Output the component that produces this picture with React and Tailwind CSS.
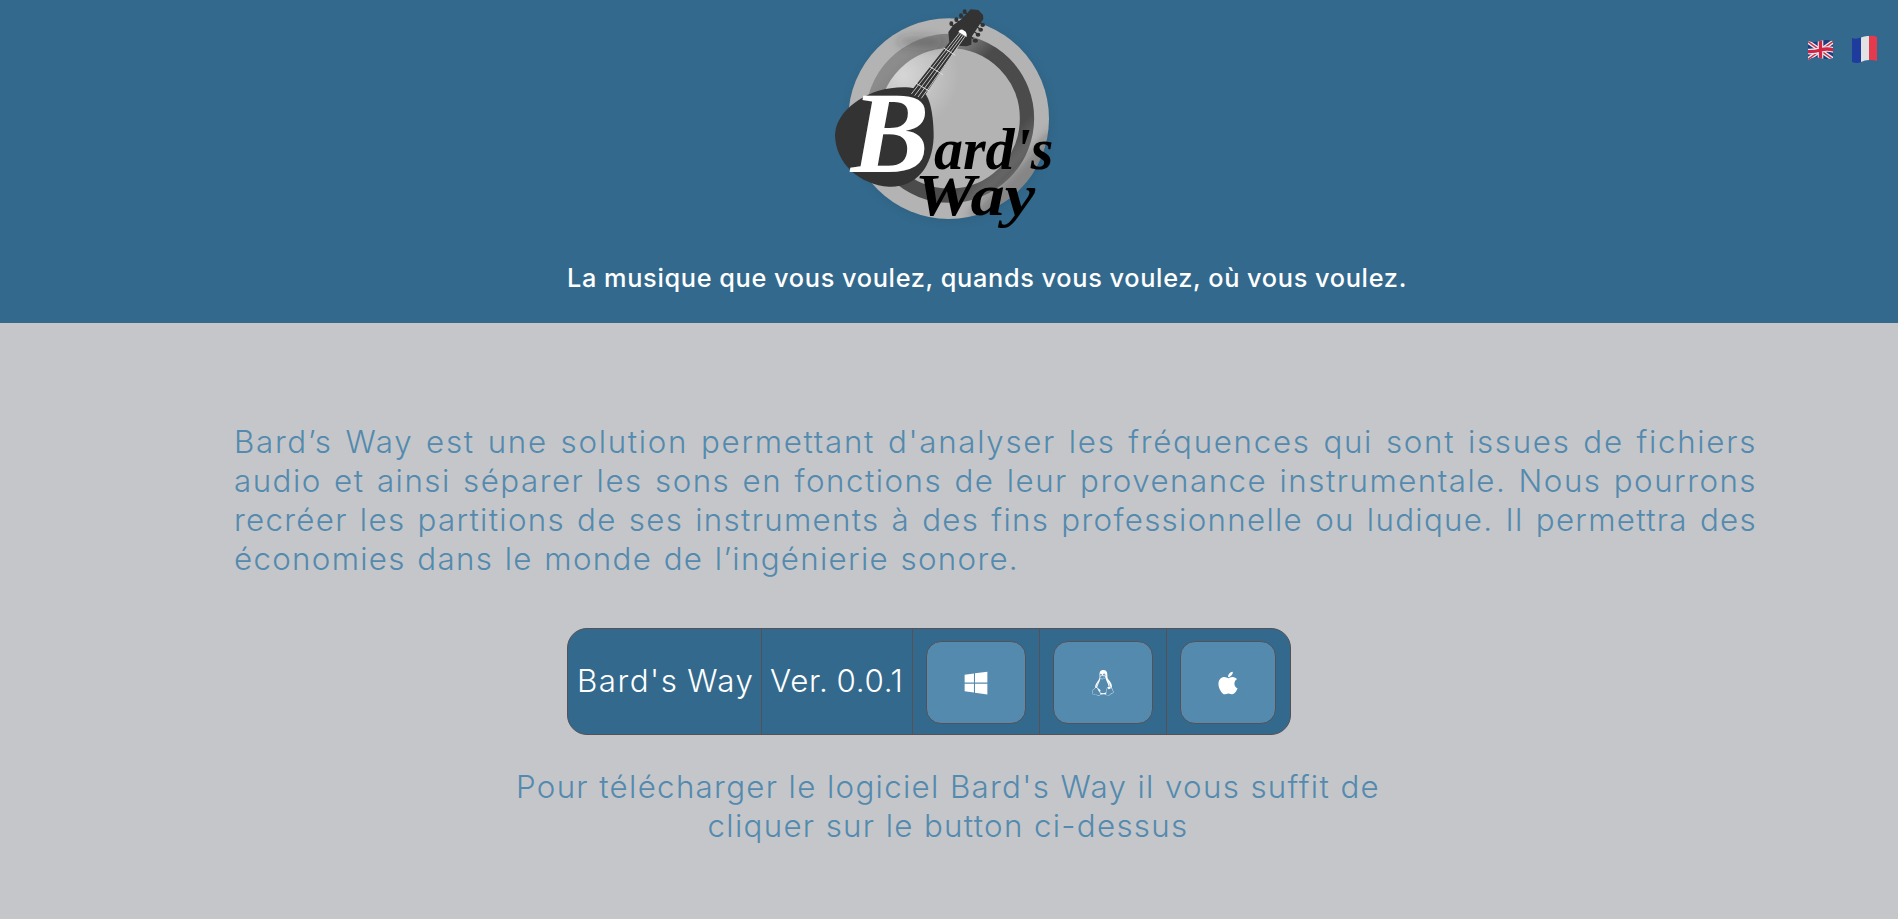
import React from "react";
import { FaWindows, FaLinux, FaApple } from "react-icons/fa";

const lines = [
  ["Bard’s Way est une solution permettant d'analyser les fréquences qui sont issues de fichiers", "w-[1523px] tracking-[1.7px]"],
  ["audio et ainsi séparer les sons en fonctions de leur provenance instrumentale. Nous pourrons", "w-[1523px] tracking-[1.5px]"],
  ["recréer les partitions de ses instruments à des fins professionnelle ou ludique. Il permettra des", "w-[1523px] tracking-[1.3px]"],
  ["économies dans le monde de l’ingénierie sonore.", "w-[785px] tracking-[1.3px]"],
];

function Logo() {
  return (
    <svg className="block h-[240px] w-[250px]" viewBox="0 0 750 720" aria-label="Bard's Way">
      <defs>
        <linearGradient id="ring" x1="0" y1="0" x2="1" y2="1">
          <stop offset="0.15" stopColor="#8c8c8c" />
          <stop offset="0.32" stopColor="#747474" />
          <stop offset="0.42" stopColor="#4b4b4b" />
          <stop offset="0.75" stopColor="#4b4b4b" />
          <stop offset="0.9" stopColor="#777" />
        </linearGradient>
        <radialGradient id="shine" cx="0.2" cy="0.22" r="0.36">
          <stop offset="0" stopColor="#d6d6d6" />
          <stop offset="1" stopColor="#b3b3b3" />
        </radialGradient>
        <filter id="soft" x="-30%" y="-30%" width="160%" height="160%">
          <feGaussianBlur stdDeviation="14" />
        </filter>
        <clipPath id="disc"><circle cx="386" cy="356" r="301" /></clipPath>
      </defs>
      <circle cx="389" cy="362" r="300" fill="#1e4259" opacity="0.2" filter="url(#soft)" />
      <circle cx="386" cy="356" r="301" fill="#b3b3b3" />
      <circle cx="389" cy="355" r="232" fill="url(#shine)" stroke="url(#ring)" strokeWidth="43" />
      <g clipPath="url(#disc)">
        <g filter="url(#soft)">
          <path d="M610 480 L700 385 L690 520 L610 600 L570 660 L440 650 Z" fill="#222" opacity="0.3" />
          <ellipse cx="300" cy="125" rx="70" ry="15" fill="#333" opacity="0.3" />
        </g>
      </g>
      <path d="M45 404C48 344 105 296 173 273C228 257 288 258 311 276C334 297 341 360 341 412C337 505 285 563 207 560C120 554 46 491 45 404Z" fill="#333" />
      <path d="M273 274L388 127L385 96L400 75L425 57L452 28L475 30L489 45L490 57L472 84L455 110L454 134L439 139L415 137L307 296Z" fill="#333" />
      <g fill="#333" stroke="#333" strokeWidth="4">
        <path d="M393 71L410 87M408 59L423 70M422 47L438 57M433 35L448 47M460 116L443 104M472 102L455 89M481 88L464 75M488 74L471 61" />
        <ellipse cx="394" cy="71" rx="4" ry="5" /><ellipse cx="409" cy="59" rx="4" ry="5" /><ellipse cx="423" cy="47" rx="4" ry="5" /><ellipse cx="434" cy="35" rx="4" ry="5" />
        <ellipse cx="466" cy="122" rx="6" ry="4" /><ellipse cx="474" cy="104" rx="5" ry="4" /><ellipse cx="482" cy="89" rx="5" ry="4" /><ellipse cx="488" cy="75" rx="5" ry="4" />
      </g>
      <path d="M415 96Q419 87 428 89L437 95Q442 102 440 111L430 105Z" fill="#fff" />
      <g stroke="#ddd" strokeWidth="2.5" fill="none">
        <path d="M418 99L274 282M424 102L284 287M430 105L294 291M436 108L304 295" />
        <path d="M371 144L406 166M328 199L369 224M287 249L329 274" strokeWidth="3" />
      </g>
      <g fontFamily="'Liberation Serif', serif" fontWeight="700" fontStyle="italic">
        <text x="92" y="515" fontSize="350" fill="#fff" textLength="236" lengthAdjust="spacingAndGlyphs">B</text>
        <text x="342" y="506" fontSize="176" textLength="358" lengthAdjust="spacingAndGlyphs">ard's</text>
        <text x="284" y="645" fontSize="180" textLength="362" lengthAdjust="spacingAndGlyphs">Way</text>
      </g>
    </svg>
  );
}

function UnitedKingdomFlag() {
  return (
    <svg className="h-[24px] w-[27px]" viewBox="0 0 27 24">
      <defs><clipPath id="uk"><path d="M1 3Q7 5 13 3T26 3V20Q20 22 13 20T1 22Z" /></clipPath></defs>
      <g clipPath="url(#uk)">
        <path d="M0 0H27V24H0Z" fill="#1d3f80" />
        <path d="M0 3L27 22M27 3L0 22" stroke="#e8e8ee" strokeWidth="4" />
        <path d="M0 3L27 22M27 3L0 22" stroke="#d22c42" strokeWidth="1.5" />
        <path d="M13.5 0V24M0 13.5Q7 14 13.5 12T27 12" fill="none" stroke="#e8e8ee" strokeWidth="5.6" />
        <path d="M13.5 0V24M0 13.5Q7 14 13.5 12T27 12" fill="none" stroke="#d22442" strokeWidth="3.3" />
      </g>
    </svg>
  );
}

function FrenchFlag() {
  return (
    <svg className="h-[30px] w-[26px]" viewBox="0 0 26 30">
      <path d="M0 3Q4 4.5 9 2.5V27Q5 29 0 27Z" fill="#1d3c9e" />
      <path d="M9 2.5Q13 .5 17 1V25Q13 25 9 27Z" fill="#e1e2e4" />
      <path d="M17 1Q22 0 25 2V26Q21 24.5 17 25Z" fill="#e43a4d" />
    </svg>
  );
}

const button = "flex h-[83px] items-center justify-center rounded-[15px] border border-[#555157] bg-[#538aae] text-white";

export default function App() {
  return (
    <div className="flex h-[919px] flex-col overflow-hidden bg-[#c5c6ca] font-['Inter','Liberation_Sans',sans-serif] text-[31.3px] leading-[39px] font-[360] [word-spacing:-1.5px] text-[#538aae]">
      <header className="relative h-[323px] shrink-0 bg-[#33698c] text-white">
        <div className="flex pl-[820px]"><Logo /></div>
        <p className="ml-[567px] w-[840px] pt-[20px] text-[25.3px] leading-[36px] font-medium tracking-[0.7px] whitespace-nowrap [text-align-last:justify]">La musique que vous voulez, quands vous voulez, où vous voulez.</p>
        <nav className="absolute top-[35px] left-[1807px] flex items-center gap-[18px]">
          <button aria-label="English"><UnitedKingdomFlag /></button>
          <button aria-label="Français"><FrenchFlag /></button>
        </nav>
      </header>
      <main className="flex grow flex-col">
        <section className="mt-[100px] ml-[234px]">
          {lines.map(([text, cls]) => (
            <p key={text} className={`whitespace-nowrap [text-align-last:justify] ${cls}`}>{text}</p>
          ))}
        </section>
        <section className="mt-[49px] ml-[567px] flex h-[107px] w-[724px] overflow-hidden rounded-[20px] border border-[#555157] bg-[#33698c] text-white">
          <div className="flex w-[194px] items-center border-r border-[#555157] pl-[9px] tracking-[1.5px] whitespace-nowrap">Bard's Way</div>
          <div className="flex w-[151px] items-center border-r border-[#555157] pl-[8px] tracking-[0.7px] whitespace-nowrap">Ver. 0.0.1</div>
          <div className="w-[127px] border-r border-[#555157] pt-[12px] pl-[13px]"><button aria-label="Windows" className={`w-[100px] ${button}`}><FaWindows size={26} className="-ml-px" /></button></div>
          <div className="w-[127px] border-r border-[#555157] pt-[12px] pl-[13px]"><button aria-label="Linux" className={`w-[100px] ${button}`}><FaLinux size={26} className="-ml-px" /></button></div>
          <div className="pt-[12px] pl-[13px]"><button aria-label="macOS" className={`w-[96px] ${button}`}><FaApple size={26} /></button></div>
        </section>
        <section className="mt-[33px] ml-[516px] flex w-[864px] flex-col items-center">
          <p className="w-[864px] tracking-[1.3px] whitespace-nowrap [text-align-last:justify]">Pour télécharger le logiciel Bard's Way il vous suffit de</p>
          <p className="w-[481px] tracking-[1.3px] whitespace-nowrap [text-align-last:justify]">cliquer sur le button ci-dessus</p>
        </section>
      </main>
    </div>
  );
}
